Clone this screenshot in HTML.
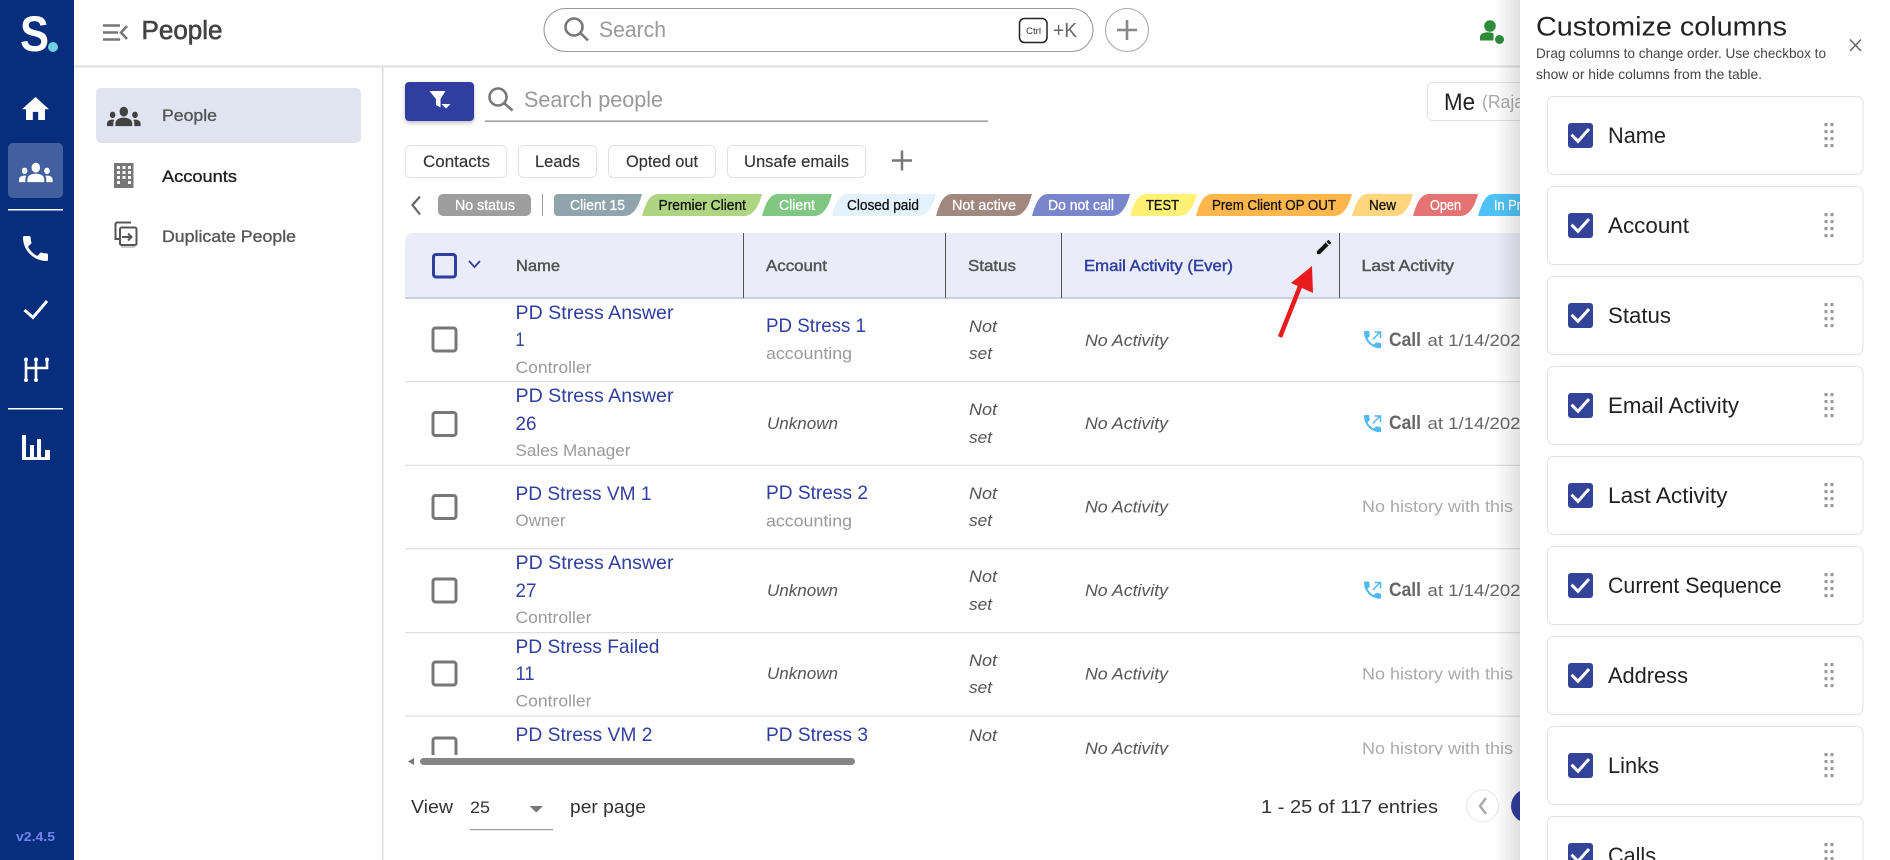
<!DOCTYPE html>
<html lang="en">
<head>
<meta charset="utf-8">
<title>People</title>
<style>
html,body{margin:0;padding:0;background:#fff;width:1890px;height:860px;overflow:hidden}
svg{display:block}
text{font-family:"Liberation Sans",sans-serif;white-space:pre}
.nm{font-size:19.5px;fill:#303f9f}
.sub{font-size:17px;fill:#9a9a9a}
.it{font-size:17px;font-style:italic;fill:#555}
.th{font-size:16px;fill:#555;stroke:#555;stroke-width:.45}
.chip{font-size:14.5px;stroke-width:.3}
.w{fill:#fff;stroke:#fff}
.d{fill:#111;stroke:#111}
.tab{font-size:17px;fill:#333;stroke:#333;stroke-width:.15}
.lab{font-size:22px;fill:#222}
.call{font-size:19px;font-weight:bold;fill:#666}
.at{font-size:17px;fill:#666}
.no{font-size:17px;fill:#aaa}
.ft{font-size:18.5px;fill:#333}
</style>
</head>
<body>
<svg xmlns="http://www.w3.org/2000/svg" width="1890" height="860" viewBox="0 0 1890 860">
<defs>
<linearGradient id="sh" x1="0" x2="1" y1="0" y2="0"><stop offset="0" stop-color="#000" stop-opacity="0"/><stop offset="1" stop-color="#000" stop-opacity=".12"/></linearGradient>
<path id="groups" d="M12 12.75c1.63 0 3.07.39 4.24.9 1.08.48 1.76 1.56 1.76 2.73V18H6v-1.61c0-1.18.68-2.26 1.76-2.73 1.17-.52 2.61-.91 4.24-.91zM4 13c1.1 0 2-.9 2-2s-.9-2-2-2-2 .9-2 2 .9 2 2 2zm1.13 1.1c-.37-.06-.74-.1-1.13-.1-.99 0-1.93.21-2.78.58C.48 14.9 0 15.62 0 16.43V18h4.5v-1.61c0-.83.23-1.61.63-2.29zM20 13c1.1 0 2-.9 2-2s-.9-2-2-2-2 .9-2 2 .9 2 2 2zm4 3.43c0-.81-.48-1.53-1.22-1.85-.85-.37-1.79-.58-2.78-.58-.39 0-.76.04-1.13.1.4.68.63 1.46.63 2.29V18H24v-1.57zM12 6c1.66 0 3 1.34 3 3s-1.34 3-3 3-3-1.34-3-3 1.34-3 3-3z"/>
<path id="phone" d="M6.62 10.79c1.44 2.83 3.76 5.14 6.59 6.59l2.2-2.2c.27-.27.67-.36 1.02-.24 1.12.37 2.33.57 3.57.57.55 0 1 .45 1 1V20c0 .55-.45 1-1 1-9.39 0-17-7.61-17-17 0-.55.45-1 1-1h3.5c.55 0 1 .45 1 1 0 1.25.2 2.45.57 3.57.11.35.03.74-.25 1.02l-2.2 2.2z"/>
<g id="callic" fill="#4fb8f5"><use href="#phone" transform="translate(-2.85 -2.85) scale(.95)"/><path d="M9 8.5L15.5 1.5M10.5 1H16.500V7" fill="none" stroke="#4fb8f5" stroke-width="1.500"/></g>
<g id="cb"><rect x="0" y="0" width="25" height="25" rx="3" fill="#334397"/><path d="M3.500 11.700L10 18.300L21 6" fill="none" stroke="#fff" stroke-width="3"/></g>
<g id="drag" fill="#999"><rect x="0.500" y="0" width="3" height="3.200"/><rect x="6.500" y="0" width="3" height="3.200"/><rect x="0.500" y="7" width="3" height="3.200"/><rect x="6.500" y="7" width="3" height="3.200"/><rect x="0.500" y="14" width="3" height="3.200"/><rect x="6.500" y="14" width="3" height="3.200"/><rect x="0.500" y="21" width="3" height="3.200"/><rect x="6.500" y="21" width="3" height="3.200"/></g>
<rect id="rowcb" x="0" y="0" width="23" height="23" rx="2.5" fill="#fff" stroke="#777" stroke-width="3"/>
</defs>

<!-- header / sub nav rules -->
<rect x="74" y="65.5" width="1446" height="2" fill="#dfdfdf"/>
<rect x="382" y="67" width="1.5" height="793" fill="#dedede"/>

<!-- left rail -->
<rect x="0" y="0" width="74" height="860" fill="#072d7d"/>
<text x="20" y="51" font-size="50" font-weight="bold" fill="#fff" textLength="29" lengthAdjust="spacingAndGlyphs">S</text>
<circle cx="53" cy="47" r="5" fill="#6fd0e0"/>
<path d="M10 20v-6h4v6h5v-8h3L12 3 2 12h3v8z" fill="#fff" transform="translate(19.3 93) scale(1.35)"/>
<rect x="8" y="143" width="55" height="55" rx="5" fill="#42609f"/>
<use href="#groups" fill="#fff" transform="translate(19 153) scale(1.4 1.62)"/>
<rect x="8" y="209" width="55" height="1.5" fill="#fff"/>
<use href="#phone" fill="#fff" transform="translate(18.8 231.8) scale(1.39)"/>
<path d="M24.5 310L33 317.5L47 301" fill="none" stroke="#fff" stroke-width="3"/>
<path d="M26 360V380M36 360V380M47 360V368H26" fill="none" stroke="#fff" stroke-width="2.6"/>
<g fill="#fff"><circle cx="26" cy="359.5" r="2"/><circle cx="36" cy="359.5" r="2"/><circle cx="47" cy="359.5" r="2"/><circle cx="26" cy="380" r="2"/><circle cx="36" cy="380" r="2"/></g>
<rect x="8" y="408" width="55" height="1.5" fill="#fff"/>
<g fill="#fff"><rect x="22" y="435" width="4" height="25"/><rect x="30" y="445" width="4" height="15"/><rect x="37" y="439" width="4" height="21"/><rect x="45" y="450" width="5" height="10"/><rect x="22" y="457" width="28" height="3"/></g>
<text x="16" y="841" font-size="13" font-weight="bold" fill="#7085ea" textLength="39" lengthAdjust="spacingAndGlyphs">v2.4.5</text>

<!-- title -->
<g stroke="#777" stroke-width="2.6" fill="none"><path d="M103 25.5H120M103 32.5H118M103 39.5H120"/><path d="M127 26L121 32.5L127 39"/></g>
<text x="141.500" y="39" font-size="25.500" fill="#424242" stroke="#424242" stroke-width=".6" textLength="81" lengthAdjust="spacingAndGlyphs">People</text>

<!-- sub nav -->
<rect x="96" y="88" width="265" height="55" rx="5" fill="#e0e4f0"/>
<use href="#groups" fill="#424242" transform="translate(107 97) scale(1.4 1.62)"/>
<text x="162" y="121" font-size="17" fill="#555" stroke="#555" stroke-width=".35" textLength="55" lengthAdjust="spacingAndGlyphs">People</text>
<rect x="114" y="163" width="19.5" height="25" fill="#777"/>
<g fill="#fff"><rect x="117" y="166" width="3" height="3"/><rect x="122.5" y="166" width="3" height="3"/><rect x="128" y="166" width="3" height="3"/><rect x="117" y="171" width="3" height="3"/><rect x="122.5" y="171" width="3" height="3"/><rect x="128" y="171" width="3" height="3"/><rect x="117" y="176" width="3" height="3"/><rect x="122.5" y="176" width="3" height="3"/><rect x="128" y="176" width="3" height="3"/><rect x="117" y="181" width="3" height="3"/><rect x="128" y="181" width="3" height="3"/></g>
<text x="162" y="182" font-size="17" fill="#222" stroke="#222" stroke-width=".35" textLength="75" lengthAdjust="spacingAndGlyphs">Accounts</text>
<g fill="none" stroke="#555" stroke-width="2"><path d="M131 222.5H117a1.5 1.5 0 0 0-1.5 1.5V239H120"/><rect x="120" y="227.5" width="16.5" height="17.5" rx="1.5"/><path d="M122 237H131M128 233.5L131.5 237L128 240.5"/></g>
<path d="M121 247H135" stroke="#999" stroke-width="1"/>
<text x="162" y="242" font-size="17" fill="#555" stroke="#555" stroke-width=".35" textLength="134" lengthAdjust="spacingAndGlyphs">Duplicate People</text>

<!-- global search -->
<rect x="544" y="8.5" width="549" height="43" rx="21.5" fill="#fff" stroke="#999" stroke-width="1.1"/>
<g fill="none" stroke="#777" stroke-width="2.6"><circle cx="574" cy="27" r="8.5"/><path d="M580.5 33L588 40.5"/></g>
<text x="599" y="37" font-size="22" fill="#999" textLength="67" lengthAdjust="spacingAndGlyphs">Search</text>
<rect x="1019.5" y="18.5" width="27.5" height="24" rx="5" fill="#fff" stroke="#222" stroke-width="1.5"/>
<text x="1026" y="34" font-size="9.5" fill="#333" textLength="15" lengthAdjust="spacingAndGlyphs">Ctrl</text>
<text x="1053" y="37" font-size="20" fill="#666" textLength="24" lengthAdjust="spacingAndGlyphs">+K</text>
<circle cx="1127" cy="30" r="21.5" fill="#fff" stroke="#aaa" stroke-width="1.1"/>
<path d="M1117 30H1137M1127 20V40" stroke="#888" stroke-width="2.6"/>

<!-- user icon -->
<circle cx="1490" cy="26" r="5.8" fill="#2e8b3a"/>
<path d="M1480 40.5V37c0-3 3.5-4.8 8-4.8c2.2 0 4 .4 5.5 1.2v7.100z" fill="#2e8b3a"/>
<circle cx="1499.500" cy="39.500" r="4.500" fill="#2e8b3a"/>

<!-- filter + search people -->
<rect x="405" y="82" width="69" height="39" rx="4" fill="#303f9f" style="filter:drop-shadow(0 2px 2px rgba(0,0,0,.25))"/>
<path d="M429.500 91H445.500L440.500 99V107.500L436 105V99Z" fill="#fff"/>
<path d="M441.500 104H450.500L446 108.500Z" fill="#fff"/>
<g fill="none" stroke="#777" stroke-width="2.600"><circle cx="498" cy="97" r="8.500"/><path d="M504.500 103.500L512.500 110.500"/></g>
<text x="524" y="107" font-size="22.500" fill="#999" textLength="139" lengthAdjust="spacingAndGlyphs">Search people</text>
<rect x="485" y="120.500" width="503" height="1.300" fill="#888"/>
<rect x="1427.500" y="82.500" width="120" height="38" rx="5" fill="#fff" stroke="#e2e2e2"/>
<text x="1444" y="110" font-size="24" fill="#222" textLength="31" lengthAdjust="spacingAndGlyphs">Me</text>
<text x="1482" y="108" font-size="18" fill="#aaa" textLength="42" lengthAdjust="spacingAndGlyphs">(Raja</text>

<!-- tabs -->
<g fill="#fff" stroke="#e2e2e2">
<rect x="405.500" y="145.500" width="101" height="32" rx="5"/>
<rect x="518.500" y="145.500" width="78" height="32" rx="5"/>
<rect x="608.500" y="145.500" width="107" height="32" rx="5"/>
<rect x="727.500" y="145.500" width="138" height="32" rx="5"/>
</g>
<text x="423" y="167" class="tab" textLength="67" lengthAdjust="spacingAndGlyphs">Contacts</text>
<text x="535" y="167" class="tab" textLength="45" lengthAdjust="spacingAndGlyphs">Leads</text>
<text x="626" y="167" class="tab" textLength="72" lengthAdjust="spacingAndGlyphs">Opted out</text>
<text x="744" y="167" class="tab" textLength="105" lengthAdjust="spacingAndGlyphs">Unsafe emails</text>
<path d="M892 160.500H912M902 150.500V170.500" stroke="#777" stroke-width="2.500"/>

<!-- status chips -->
<path d="M420 196.500L412.500 205L420 214.500" fill="none" stroke="#666" stroke-width="2.200"/>
<rect x="438" y="194" width="93" height="22" rx="5" fill="#9e9e9e"/>
<text x="455" y="210" class="chip w" textLength="60" lengthAdjust="spacingAndGlyphs">No status</text>
<rect x="542" y="194" width="1" height="22" fill="#999"/>
<path d="M554 198a4 4 0 0 1 4-4H642c-3 11-8 22-18 22H558a4 4 0 0 1-4-4z" fill="#90a4ae"/>
<path d="M642 216c3-11 7-22 16-22H762c-3 11-8 22-18 22z" fill="#aed581"/>
<path d="M762 216c3-11 7-22 16-22H832c-3 11-8 22-18 22z" fill="#81c784"/>
<path d="M832 216c3-11 7-22 16-22H936c-3 11-8 22-18 22z" fill="#e3f2fd"/>
<path d="M936 216c3-11 7-22 16-22H1032c-3 11-8 22-18 22z" fill="#a1887f"/>
<path d="M1032 216c3-11 7-22 16-22H1130c-3 11-8 22-18 22z" fill="#7986cb"/>
<path d="M1130 216c3-11 7-22 16-22H1197c-3 11-8 22-18 22z" fill="#fff176"/>
<path d="M1196 216c3-11 7-22 16-22H1352c-3 11-8 22-18 22z" fill="#ffb74d"/>
<path d="M1352 216c3-11 7-22 16-22H1413c-3 11-8 22-18 22z" fill="#ffd57e"/>
<path d="M1413 216c3-11 7-22 16-22H1478c-3 11-8 22-18 22z" fill="#e57373"/>
<path d="M1478 216c3-11 7-22 16-22H1560V216z" fill="#4fc3f7"/>
<text x="570" y="210" class="chip w" textLength="55" lengthAdjust="spacingAndGlyphs">Client 15</text>
<text x="658.500" y="210" class="chip d" textLength="87.500" lengthAdjust="spacingAndGlyphs">Premier Client</text>
<text x="779" y="210" class="chip w" textLength="36" lengthAdjust="spacingAndGlyphs">Client</text>
<text x="847" y="210" class="chip d" textLength="72" lengthAdjust="spacingAndGlyphs">Closed paid</text>
<text x="952" y="210" class="chip w" textLength="64" lengthAdjust="spacingAndGlyphs">Not active</text>
<text x="1048" y="210" class="chip w" textLength="66" lengthAdjust="spacingAndGlyphs">Do not call</text>
<text x="1146" y="210" class="chip d" textLength="33" lengthAdjust="spacingAndGlyphs">TEST</text>
<text x="1212" y="210" class="chip d" textLength="124" lengthAdjust="spacingAndGlyphs">Prem Client OP OUT</text>
<text x="1369" y="210" class="chip d" textLength="27" lengthAdjust="spacingAndGlyphs">New</text>
<text x="1430" y="210" class="chip w" textLength="31" lengthAdjust="spacingAndGlyphs">Open</text>
<text x="1494" y="210" class="chip w" textLength="41" lengthAdjust="spacingAndGlyphs">In Prog</text>

<!-- table head -->
<path d="M405 298V241a8 8 0 0 1 8-8H1525V298Z" fill="#eaedf9"/>
<rect x="405" y="297" width="1120" height="2" fill="#ccd0e0"/>
<g fill="#555"><rect x="743" y="233" width="1" height="65"/><rect x="945" y="233" width="1" height="65"/><rect x="1061" y="233" width="1" height="65"/><rect x="1339" y="233" width="1" height="65"/></g>
<rect x="433.500" y="254.500" width="22" height="22.500" rx="2.500" fill="none" stroke="#303f9f" stroke-width="3"/>
<path d="M469 261L474.500 267L480 261" fill="none" stroke="#303f9f" stroke-width="1.800"/>
<text x="516" y="271" class="th" textLength="44" lengthAdjust="spacingAndGlyphs">Name</text>
<text x="766" y="271" class="th" textLength="61" lengthAdjust="spacingAndGlyphs">Account</text>
<text x="968" y="271" class="th" textLength="48" lengthAdjust="spacingAndGlyphs">Status</text>
<text x="1084" y="271" class="th" style="fill:#303f9f;stroke:#303f9f" textLength="149" lengthAdjust="spacingAndGlyphs">Email Activity (Ever)</text>
<text x="1361.500" y="271" class="th" textLength="92.500" lengthAdjust="spacingAndGlyphs">Last Activity</text>
<path d="M3 17.25V21h3.750L17.810 9.940l-3.750-3.750L3 17.250zM20.710 7.040c.39-.39.39-1.020 0-1.410l-2.340-2.340c-.39-.39-1.020-.39-1.410 0l-1.830 1.830 3.750 3.750 1.830-1.830z" fill="#111" transform="translate(1314.700 237.700) scale(.78)"/>

<!-- row rules -->
<g fill="#e0e0e0"><rect x="405" y="381" width="1115" height="1.300"/><rect x="405" y="464.700" width="1115" height="1.300"/><rect x="405" y="548" width="1115" height="1.300"/><rect x="405" y="632" width="1115" height="1.300"/><rect x="405" y="715.500" width="1115" height="1.300"/></g>

<!-- row 1 -->
<use href="#rowcb" x="433" y="328"/>
<text x="515.500" y="319" class="nm" textLength="158" lengthAdjust="spacingAndGlyphs">PD Stress Answer</text>
<text x="515.500" y="346" class="nm" textLength="9" lengthAdjust="spacingAndGlyphs">1</text>
<text x="515.500" y="373" class="sub" textLength="76" lengthAdjust="spacingAndGlyphs">Controller</text>
<text x="766" y="332" class="nm" textLength="100" lengthAdjust="spacingAndGlyphs">PD Stress 1</text>
<text x="766" y="359" class="sub" textLength="86" lengthAdjust="spacingAndGlyphs">accounting</text>
<text x="969" y="332" class="it" textLength="28" lengthAdjust="spacingAndGlyphs">Not</text>
<text x="969" y="359" class="it" textLength="23" lengthAdjust="spacingAndGlyphs">set</text>
<text x="1085" y="346" class="it" textLength="83" lengthAdjust="spacingAndGlyphs">No Activity</text>
<use href="#callic" x="1364" y="331"/>
<text x="1389" y="346" class="call" textLength="32" lengthAdjust="spacingAndGlyphs">Call</text>
<text x="1427.500" y="346" class="at" textLength="93" lengthAdjust="spacingAndGlyphs">at 1/14/202</text>

<!-- row 2 -->
<use href="#rowcb" x="433" y="412.500"/>
<text x="515.500" y="402" class="nm" textLength="158" lengthAdjust="spacingAndGlyphs">PD Stress Answer</text>
<text x="515.500" y="430" class="nm" textLength="21" lengthAdjust="spacingAndGlyphs">26</text>
<text x="515.500" y="456" class="sub" textLength="115" lengthAdjust="spacingAndGlyphs">Sales Manager</text>
<text x="767" y="429" class="it" textLength="71" lengthAdjust="spacingAndGlyphs">Unknown</text>
<text x="969" y="415" class="it" textLength="28" lengthAdjust="spacingAndGlyphs">Not</text>
<text x="969" y="443" class="it" textLength="23" lengthAdjust="spacingAndGlyphs">set</text>
<text x="1085" y="429" class="it" textLength="83" lengthAdjust="spacingAndGlyphs">No Activity</text>
<use href="#callic" x="1364" y="415"/>
<text x="1389" y="429" class="call" textLength="32" lengthAdjust="spacingAndGlyphs">Call</text>
<text x="1427.500" y="429" class="at" textLength="93" lengthAdjust="spacingAndGlyphs">at 1/14/202</text>

<!-- row 3 -->
<use href="#rowcb" x="433" y="495.500"/>
<text x="515.500" y="500" class="nm" textLength="136" lengthAdjust="spacingAndGlyphs">PD Stress VM 1</text>
<text x="515.500" y="526" class="sub" textLength="50" lengthAdjust="spacingAndGlyphs">Owner</text>
<text x="766" y="499" class="nm" textLength="102" lengthAdjust="spacingAndGlyphs">PD Stress 2</text>
<text x="766" y="526.500" class="sub" textLength="86" lengthAdjust="spacingAndGlyphs">accounting</text>
<text x="969" y="499" class="it" textLength="28" lengthAdjust="spacingAndGlyphs">Not</text>
<text x="969" y="526" class="it" textLength="23" lengthAdjust="spacingAndGlyphs">set</text>
<text x="1085" y="512.500" class="it" textLength="83" lengthAdjust="spacingAndGlyphs">No Activity</text>
<text x="1362" y="512" class="no" textLength="151" lengthAdjust="spacingAndGlyphs">No history with this</text>

<!-- row 4 -->
<use href="#rowcb" x="433" y="579"/>
<text x="515.500" y="569" class="nm" textLength="158" lengthAdjust="spacingAndGlyphs">PD Stress Answer</text>
<text x="515.500" y="597" class="nm" textLength="21" lengthAdjust="spacingAndGlyphs">27</text>
<text x="515.500" y="623" class="sub" textLength="76" lengthAdjust="spacingAndGlyphs">Controller</text>
<text x="767" y="596" class="it" textLength="71" lengthAdjust="spacingAndGlyphs">Unknown</text>
<text x="969" y="582" class="it" textLength="28" lengthAdjust="spacingAndGlyphs">Not</text>
<text x="969" y="610" class="it" textLength="23" lengthAdjust="spacingAndGlyphs">set</text>
<text x="1085" y="596" class="it" textLength="83" lengthAdjust="spacingAndGlyphs">No Activity</text>
<use href="#callic" x="1364" y="581.500"/>
<text x="1389" y="596" class="call" textLength="32" lengthAdjust="spacingAndGlyphs">Call</text>
<text x="1427.500" y="596" class="at" textLength="93" lengthAdjust="spacingAndGlyphs">at 1/14/202</text>

<!-- row 5 -->
<use href="#rowcb" x="433" y="662"/>
<text x="515.500" y="653" class="nm" textLength="144" lengthAdjust="spacingAndGlyphs">PD Stress Failed</text>
<text x="515.500" y="680" class="nm" textLength="19" lengthAdjust="spacingAndGlyphs">11</text>
<text x="515.500" y="706.500" class="sub" textLength="76" lengthAdjust="spacingAndGlyphs">Controller</text>
<text x="767" y="679" class="it" textLength="71" lengthAdjust="spacingAndGlyphs">Unknown</text>
<text x="969" y="666" class="it" textLength="28" lengthAdjust="spacingAndGlyphs">Not</text>
<text x="969" y="693" class="it" textLength="23" lengthAdjust="spacingAndGlyphs">set</text>
<text x="1085" y="679.500" class="it" textLength="83" lengthAdjust="spacingAndGlyphs">No Activity</text>
<text x="1362" y="679.500" class="no" textLength="151" lengthAdjust="spacingAndGlyphs">No history with this</text>

<!-- row 6 -->
<use href="#rowcb" x="433" y="738"/>
<text x="515.500" y="741" class="nm" textLength="137" lengthAdjust="spacingAndGlyphs">PD Stress VM 2</text>
<text x="766" y="741" class="nm" textLength="102" lengthAdjust="spacingAndGlyphs">PD Stress 3</text>
<text x="969" y="741" class="it" textLength="28" lengthAdjust="spacingAndGlyphs">Not</text>
<text x="1085" y="754" class="it" textLength="83" lengthAdjust="spacingAndGlyphs">No Activity</text>
<text x="1362" y="754" class="no" textLength="151" lengthAdjust="spacingAndGlyphs">No history with this</text>

<!-- red arrow -->
<path d="M1280 337L1301 284" stroke="#e81c1c" stroke-width="4.500" fill="none"/>
<path d="M1312 266L1291 283L1313 293Z" fill="#e81c1c"/>

<!-- scroll cut + scrollbar -->
<rect x="384" y="755" width="1136" height="105" fill="#fff"/>
<rect x="420" y="758" width="435" height="7" rx="3.500" fill="#868686"/>
<path d="M414 758L408 761.500L414 765Z" fill="#777"/>

<!-- footer -->
<text x="411" y="813" class="ft" textLength="42" lengthAdjust="spacingAndGlyphs">View</text>
<text x="470" y="813" font-size="17" fill="#333" textLength="20" lengthAdjust="spacingAndGlyphs">25</text>
<path d="M529.500 806H543L536.250 812.500Z" fill="#777"/>
<rect x="470" y="829" width="83" height="1.200" fill="#999"/>
<text x="570" y="813" class="ft" textLength="76" lengthAdjust="spacingAndGlyphs">per page</text>
<text x="1261" y="813" class="ft" textLength="177" lengthAdjust="spacingAndGlyphs">1 - 25 of 117 entries</text>
<circle cx="1482.500" cy="806" r="16" fill="#fff" stroke="#e6e6e6"/>
<path d="M1486 798L1480 806L1486 814" fill="none" stroke="#aaa" stroke-width="2.500"/>
<circle cx="1528" cy="806" r="17" fill="#303f9f"/>

<!-- customize panel -->
<rect x="1495" y="0" width="25" height="860" fill="url(#sh)"/>
<rect x="1520" y="0" width="370" height="860" fill="#fff"/>
<text x="1536" y="35.500" font-size="26.500" fill="#222" textLength="251" lengthAdjust="spacingAndGlyphs">Customize columns</text>
<text x="1536" y="58" font-size="14" fill="#444" textLength="290" lengthAdjust="spacingAndGlyphs">Drag columns to change order. Use checkbox to</text>
<text x="1536" y="79" font-size="14" fill="#444" textLength="226" lengthAdjust="spacingAndGlyphs">show or hide columns from the table.</text>
<path d="M1850 39.500L1861 51M1861 39.500L1850 51" stroke="#666" stroke-width="1.500"/>

<g fill="#fff" stroke="#e2e2e2">
<rect x="1547.500" y="96.500" width="315.500" height="78" rx="6"/>
<rect x="1547.500" y="186.500" width="315.500" height="78" rx="6"/>
<rect x="1547.500" y="276.500" width="315.500" height="78" rx="6"/>
<rect x="1547.500" y="366.500" width="315.500" height="78" rx="6"/>
<rect x="1547.500" y="456.500" width="315.500" height="78" rx="6"/>
<rect x="1547.500" y="546.500" width="315.500" height="78" rx="6"/>
<rect x="1547.500" y="636.500" width="315.500" height="78" rx="6"/>
<rect x="1547.500" y="726.500" width="315.500" height="78" rx="6"/>
<rect x="1547.500" y="816.500" width="315.500" height="78" rx="6"/>
</g>
<use href="#cb" x="1568" y="123"/><use href="#drag" x="1824" y="123"/>
<use href="#cb" x="1568" y="213"/><use href="#drag" x="1824" y="213"/>
<use href="#cb" x="1568" y="303"/><use href="#drag" x="1824" y="303"/>
<use href="#cb" x="1568" y="393"/><use href="#drag" x="1824" y="393"/>
<use href="#cb" x="1568" y="483"/><use href="#drag" x="1824" y="483"/>
<use href="#cb" x="1568" y="573"/><use href="#drag" x="1824" y="573"/>
<use href="#cb" x="1568" y="663"/><use href="#drag" x="1824" y="663"/>
<use href="#cb" x="1568" y="753"/><use href="#drag" x="1824" y="753"/>
<use href="#cb" x="1568" y="843"/><use href="#drag" x="1824" y="843"/>
<text x="1608" y="143" class="lab" textLength="58" lengthAdjust="spacingAndGlyphs">Name</text>
<text x="1608" y="233" class="lab" textLength="81" lengthAdjust="spacingAndGlyphs">Account</text>
<text x="1608" y="323" class="lab" textLength="63" lengthAdjust="spacingAndGlyphs">Status</text>
<text x="1608" y="413" class="lab" textLength="131" lengthAdjust="spacingAndGlyphs">Email Activity</text>
<text x="1608" y="503" class="lab" textLength="119.500" lengthAdjust="spacingAndGlyphs">Last Activity</text>
<text x="1608" y="593" class="lab" textLength="173.500" lengthAdjust="spacingAndGlyphs">Current Sequence</text>
<text x="1608" y="683" class="lab" textLength="80" lengthAdjust="spacingAndGlyphs">Address</text>
<text x="1608" y="773" class="lab" textLength="51" lengthAdjust="spacingAndGlyphs">Links</text>
<text x="1608" y="863" class="lab" textLength="48" lengthAdjust="spacingAndGlyphs">Calls</text>
</svg>
</body>
</html>
